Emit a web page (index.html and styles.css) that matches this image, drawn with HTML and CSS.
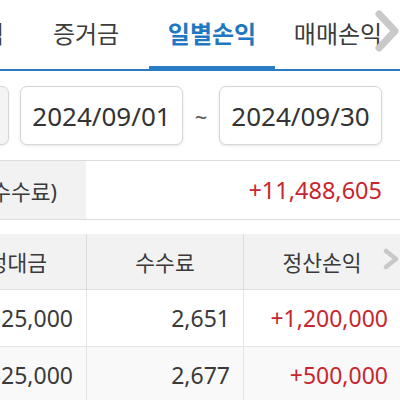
FILE: index.html
```html
<!DOCTYPE html>
<html lang="ko">
<head>
<meta charset="utf-8">
<link rel="stylesheet" href="styles.css">
</head>
<body>
<div class="screen">
  <nav class="tabs">
    <div class="tab">체결내역</div>
    <div class="tab">증거금</div>
    <div class="tab active">일별손익</div>
    <div class="tab">매매손익</div>
    <svg class="tabs-more" width="30" height="44" viewBox="0 0 30 44"><polyline points="9,4 25,21 9,38" fill="none" stroke="#c4c4c4" stroke-width="7" stroke-linecap="round" stroke-linejoin="round"/></svg>
  </nav>
  <div class="dates">
    <div class="preset"></div>
    <div class="date">2024/09/01</div>
    <span class="tilde">~</span>
    <div class="date">2024/09/30</div>
  </div>
  <div class="summary">
    <div class="sum-label">실현손익(-수수료)</div>
    <div class="sum-value">+11,488,605</div>
  </div>
  <div class="table">
    <div class="row head">
      <div class="cell">약정대금</div>
      <div class="cell">수수료</div>
      <div class="cell">정산손익</div>
      <svg class="head-more" width="18" height="22" viewBox="0 0 18 22"><polyline points="4,3 14,11 4,19" fill="none" stroke="#c8c8c8" stroke-width="4.5" stroke-linecap="round" stroke-linejoin="round"/></svg>
    </div>
    <div class="row">
      <div class="cell num">1,525,000</div>
      <div class="cell num">2,651</div>
      <div class="cell num up">+1,200,000</div>
    </div>
    <div class="row alt">
      <div class="cell num">1,525,000</div>
      <div class="cell num">2,677</div>
      <div class="cell num up">+500,000</div>
    </div>
  </div>
</div>
</body>
</html>
```
FILE: styles.css
```css
* { box-sizing: border-box; }
html, body { margin: 0; padding: 0; background: #fff; }
body {
  font-family: "Noto Sans", "Noto Sans CJK KR", sans-serif;
  color: #3a3a3a;
}
.screen {
  width: 400px;
  height: 400px;
  overflow: hidden;
  position: relative;
}
.tabs {
  display: flex;
  margin-left: -103px;
  border-bottom: 2px solid #2a7cc6;
  position: relative;
  width: 503px;
}
.tab {
  flex: 0 0 126px;
  height: 69px;
  padding-bottom: 5px;
  display: flex;
  align-items: center;
  justify-content: center;
  font-size: 24px;
  color: #3c3c3c;
  position: relative;
  white-space: nowrap;
}
.tab.active {
  color: #1f78c1;
  font-weight: bold;
}
.tab.active::after {
  content: "";
  position: absolute;
  left: 0;
  right: 0;
  bottom: -2px;
  height: 5px;
  background: #2a7cc6;
}
.tabs-more {
  position: absolute;
  right: 0;
  top: 10px;
  opacity: 0.9;
}
.dates {
  display: flex;
  align-items: center;
  padding: 15px 0;
}
.preset {
  flex: 0 0 60px;
  margin-left: -51px;
  height: 59px;
  border: 1px solid #d6d6d6;
  border-radius: 7px;
  background: #f4f4f4;
  box-shadow: 0 1px 2px rgba(0,0,0,0.08);
}
.date {
  flex: 0 0 163px;
  height: 59px;
  margin-left: 11px;
  border: 1px solid #d6d6d6;
  border-radius: 7px;
  background: #fff;
  box-shadow: 0 1px 3px rgba(0,0,0,0.1);
  display: flex;
  align-items: center;
  justify-content: center;
  font-size: 26px;
  color: #333;
}
.tilde {
  flex: 0 0 36px;
  text-align: center;
  font-size: 22px;
  color: #555;
}
.tilde + .date { margin-left: 0; }
.summary {
  display: flex;
  height: 60px;
  border-top: 1px solid #dcdcdc;
  border-bottom: 1px solid #dcdcdc;
}
.sum-label {
  flex: 0 0 86px;
  background: #f2f2f2;
  display: flex;
  align-items: center;
  justify-content: flex-end;
  padding-right: 29px;
  font-size: 21.5px;
  white-space: nowrap;
  overflow: hidden;
  color: #3a3a3a;
}
.sum-value {
  flex: 1;
  display: flex;
  align-items: center;
  justify-content: flex-end;
  padding-right: 18px;
  font-size: 23.5px;
  color: #c7262e;
}
.table {
  margin-top: 14px;
  margin-left: -71px;
  width: 471px;
}
.row {
  display: grid;
  grid-template-columns: 157px 157px 157px;
  height: 57px;
  border-bottom: 1px solid #e6e6e6;
  position: relative;
}
.row.head {
  height: 56px;
  background: #f2f2f2;
  border-bottom: 1px solid #dedede;
}
.row.alt { background: #f9f9f9; }
.cell {
  display: flex;
  align-items: center;
  justify-content: center;
  font-size: 21.5px;
  white-space: nowrap;
  color: #3a3a3a;
}
.cell + .cell { border-left: 1px solid #e4e4e4; }
.head .cell + .cell { border-left-color: #dcdcdc; }
.cell.num {
  justify-content: flex-end;
  padding-right: 13px;
  font-size: 23px;
}
.cell.up { color: #c7262e; padding-right: 12px; }
.head-more {
  position: absolute;
  right: 0;
  top: 14px;
}
```
